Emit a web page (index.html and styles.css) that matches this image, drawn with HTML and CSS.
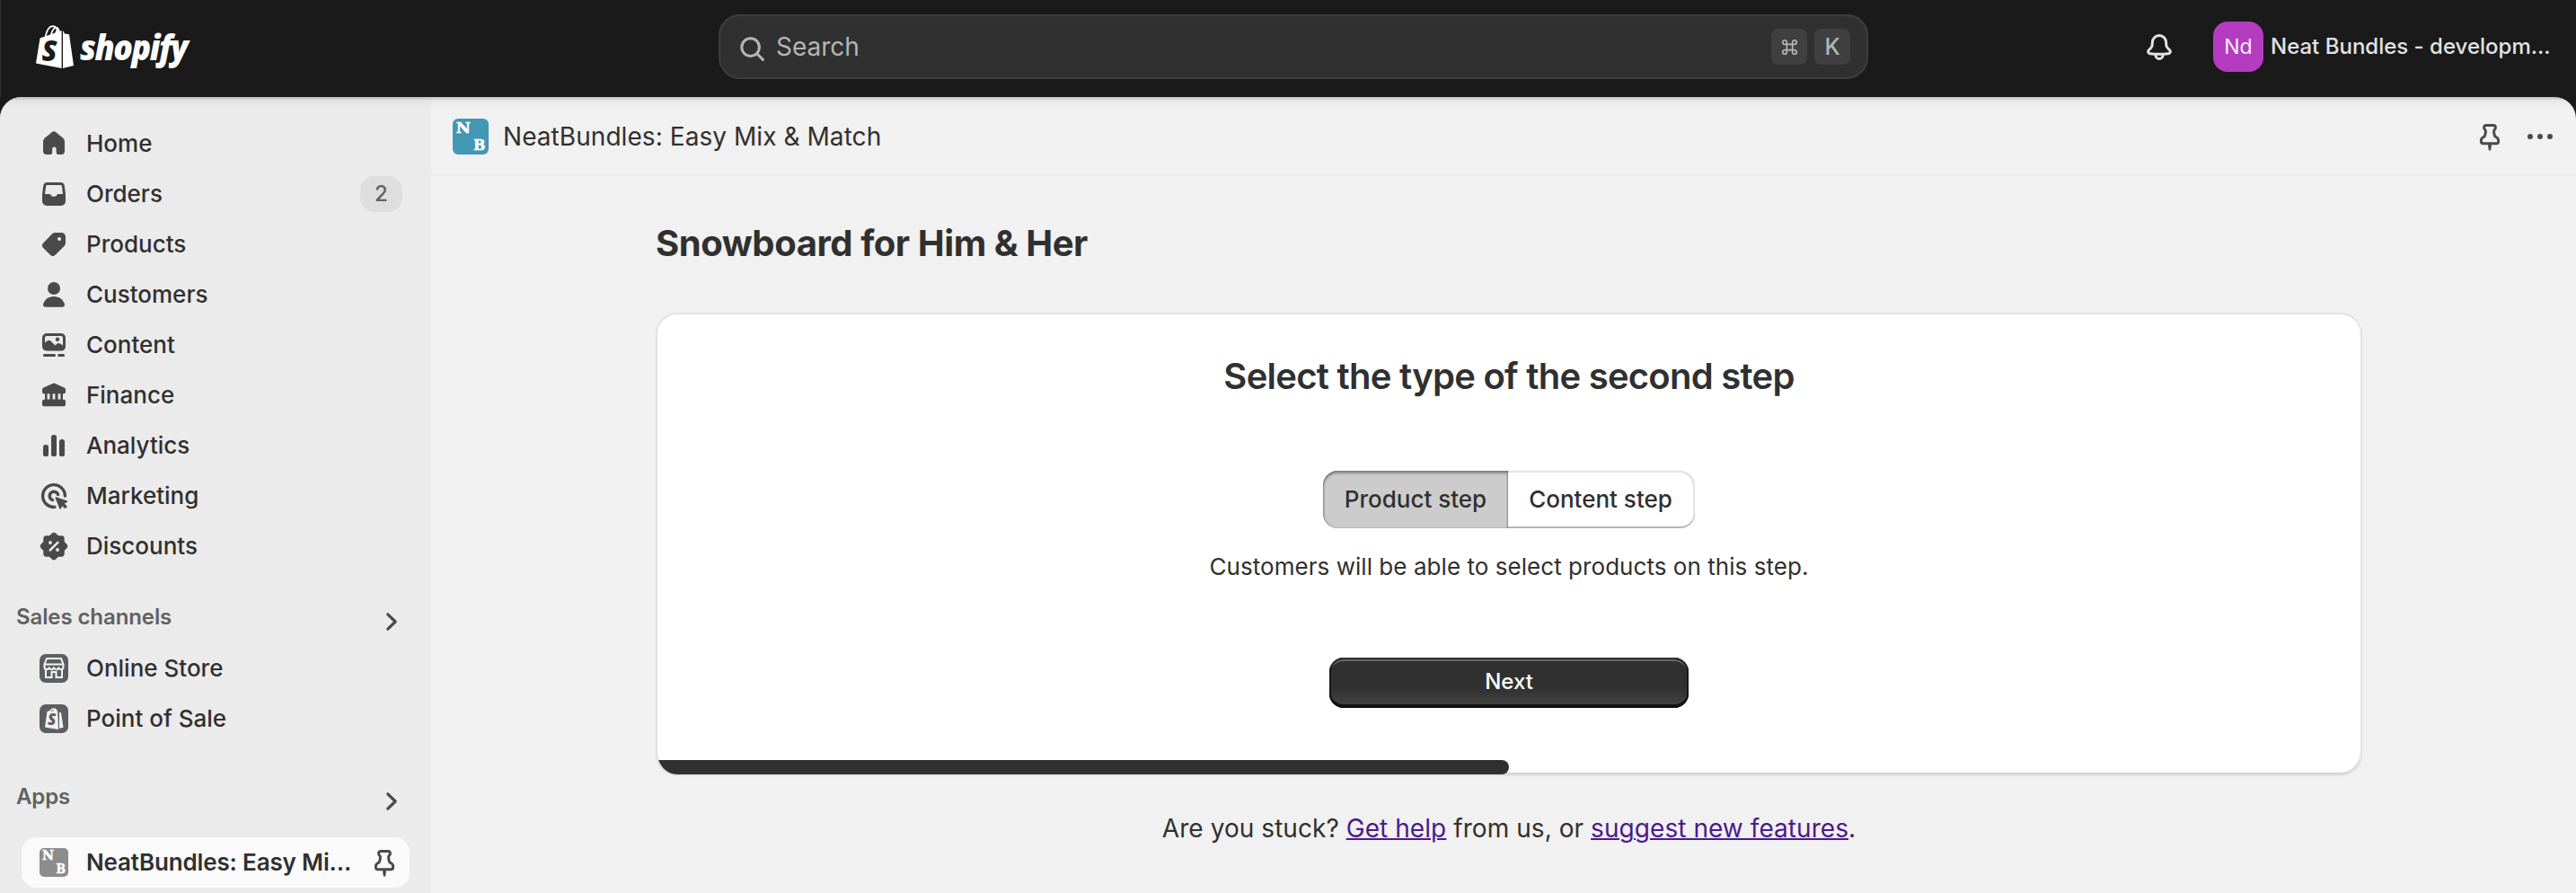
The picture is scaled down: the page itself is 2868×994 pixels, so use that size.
FILE: index.html
```html
<!DOCTYPE html>
<html lang="en">
<head>
<meta charset="utf-8">
<title>NeatBundles: Easy Mix &amp; Match</title>
<link rel="stylesheet" href="styles.css">
</head>
<body>
<svg class="defs" aria-hidden="true">
  <symbol id="pin" viewBox="0 0 20 20"><path d="M8 3.750h4c.7 0 1.200.5 1.200 1.200 0 .5-.2.9-.5 1.200-.4.4-.5.8-.4 1.300l.3 1.700c.1.6.4.9.9 1.100.8.4 1.300 1 1.300 1.900v.6c0 .6-.5 1.100-1.100 1.100H6.300c-.6 0-1.100-.5-1.100-1.100v-.6c0-.9.5-1.500 1.300-1.900.5-.2.8-.5.9-1.100l.3-1.700c.1-.5 0-.9-.4-1.300-.3-.3-.5-.7-.5-1.200 0-.7.5-1.200 1.200-1.200z" fill="none" stroke="currentColor" stroke-width="1.500" stroke-linejoin="round"/><path d="M9.100 14h1.800v1.800L10.500 17.800h-1L9.100 15.800z" fill="currentColor"/></symbol>
  <symbol id="chevron" viewBox="0 0 20 20"><path d="M7.900 5.900 12.100 10l-4.200 4.100" fill="none" stroke="currentColor" stroke-width="1.600" stroke-linecap="round" stroke-linejoin="round"/></symbol>
</svg>
<header class="topbar">
  <div class="logo">
    <svg class="bag" viewBox="0 0 42 48"><path d="M10.500 14C12 5 15.500 1.200 19 1.200S24 5 24.500 10M16.500 12C18 5 21 1.800 23.500 2.800s2.200 4 2.500 6.200M22 10c.5-3 1.500-5 3-5.500" fill="none" stroke="#fff" stroke-width="1.700"/><path d="M4.500 14.500 28.600 6v42L0 42.500z" fill="#fff"/><path d="M30 6l2 3.500 5 .8L42 45l-12 3z" fill="#fff"/><text x="6.500" y="39.500" class="bag-s">S</text></svg>
    <span class="wordmark">shopify</span>
  </div>
  <div class="search">
    <svg class="ic" viewBox="0 0 20 20"><circle cx="8.800" cy="8.800" r="4.900" fill="none" stroke="currentColor" stroke-width="1.500"/><path d="M12.500 12.500l3.200 3.200" stroke="currentColor" stroke-width="1.500" stroke-linecap="round"/></svg>
    <span class="search-text">Search</span>
    <kbd><svg viewBox="0 0 20 20"><path d="M7 7h6v6H7zM7 7H4.800A2.200 2.200 0 1 1 7 4.800zM13 7V4.800A2.200 2.200 0 1 1 15.200 7zM13 13h2.200A2.200 2.200 0 1 1 13 15.200zM7 13v2.200A2.200 2.200 0 1 1 4.800 13z" fill="none" stroke="currentColor" stroke-width="1.600"/></svg></kbd>
    <kbd>K</kbd>
  </div>
  <div class="account">
    <svg class="ic bell" viewBox="0 0 20 20"><path d="M10 3.750c-2.200 0-3.700 1.700-3.800 3.700l-.1 1.500c0 .8-.3 1.300-.8 1.800l-1 1c-.9.9-.4 2 .7 2.100 3.300.4 6.700.4 10 0 1.100-.1 1.600-1.200.7-2.100l-1-1c-.5-.5-.8-1-.8-1.800l-.1-1.500c-.1-2-1.600-3.700-3.800-3.700zM8 14.300v.4a2 2 0 0 0 4 0v-.4" fill="none" stroke="currentColor" stroke-width="1.500" stroke-linejoin="round"/></svg>
    <span class="avatar">Nd</span>
    <span class="store">Neat Bundles - developm...</span>
  </div>
</header>
<div class="frame">
  <nav class="sidebar">
    <a class="item"><svg class="ic" viewBox="0 0 20 20"><path d="M8.700 3.700a2 2 0 0 1 2.600 0l3.700 3.100c.7.6 1 1.400 1 2.300V14a2 2 0 0 1-2 2h-1.300a1.400 1.400 0 0 1-1.400-1.400v-1.700a1.100 1.100 0 0 0-2.200 0v1.700A1.400 1.400 0 0 1 7.700 16H6a2 2 0 0 1-2-2V9.100c0-.9.300-1.700 1-2.300z"/></svg>Home</a>
    <a class="item"><svg class="ic" viewBox="0 0 20 20"><path fill-rule="evenodd" d="M6.300 3.500h7.400a2.200 2.200 0 0 1 2.200 1.900l.6 4.600v4a2.500 2.500 0 0 1-2.500 2.500H6A2.500 2.500 0 0 1 3.500 14v-4l.6-4.600a2.200 2.200 0 0 1 2.200-1.900zM6.300 5c-.4 0-.7.300-.7.600L5 10h2.200c.6 0 1 .2 1.200.6.400 1 2.800 1 3.200 0 .2-.4.6-.6 1.200-.6H15l-.6-4.400c0-.3-.3-.6-.7-.6z"/></svg>Orders<span class="badge">2</span></a>
    <a class="item"><svg class="ic" viewBox="0 0 20 20"><path fill-rule="evenodd" d="M10.700 3.500h3.600a2.200 2.200 0 0 1 2.200 2.200v3.400c0 .7-.3 1.400-.8 1.900l-4.900 4.900a2 2 0 0 1-2.800 0l-3.900-3.900a2 2 0 0 1 0-2.800l4.700-4.800c.5-.6 1.200-.9 1.900-.9zM13 8a1 1 0 1 0 0-2 1 1 0 0 0 0 2z"/></svg>Products</a>
    <a class="item"><svg class="ic" viewBox="0 0 20 20"><circle cx="10" cy="6.500" r="3.500"/><path d="M10 11c3.100 0 5 1.800 5.900 4 .3 1-.3 1.900-1.200 1.900H5.300c-.9 0-1.500-.9-1.200-1.900.9-2.200 2.800-4 5.900-4z"/></svg>Customers</a>
    <a class="item"><svg class="ic" viewBox="0 0 20 20"><path fill-rule="evenodd" d="M6 3.500h8A2.500 2.500 0 0 1 16.500 6v4.800a2.500 2.500 0 0 1-2.500 2.500H6a2.500 2.500 0 0 1-2.500-2.500V6A2.500 2.500 0 0 1 6 3.500zM6 5a1 1 0 0 0-1 1v2.800l1.200-1c.6-.6 1.400-.6 2 0l2.500 2.400 1.100-.9c.5-.4 1.200-.4 1.700 0l1.500 1V6a1 1 0 0 0-1-1zM12 8a1.100 1.100 0 1 0 0-2.200A1.100 1.100 0 0 0 12 8z"/><path d="M4.700 15.700h5.600M12.800 15.700h2.500" stroke="currentColor" stroke-width="1.500" stroke-linecap="round"/></svg>Content</a>
    <a class="item"><svg class="ic" viewBox="0 0 20 20"><path d="M9.500 3.400q.5-.2 1 0l5.300 2.300q.7.300.7 1v1.400a1 1 0 0 1-1 1H15v3.300h.5a1 1 0 0 1 1 1v1.700a1 1 0 0 1-1 1h-11a1 1 0 0 1-1-1v-1.700a1 1 0 0 1 1-1H5V9.100h-.5a1 1 0 0 1-1-1V6.700q0-.7.700-1z"/><path class="cut" d="M6.300 9.100h1.400v3.200H6.300zM9.300 9.100h1.400v3.200H9.300zM12.300 9.100h1.400v3.200h-1.400z"/></svg>Finance</a>
    <a class="item"><svg class="ic" viewBox="0 0 20 20"><rect x="4" y="9.500" width="3" height="6.500" rx="1.300"/><rect x="8.500" y="4" width="3" height="12" rx="1.300"/><rect x="13" y="6.500" width="3" height="9.500" rx="1.300"/></svg>Analytics</a>
    <a class="item"><svg class="ic" viewBox="0 0 20 20"><path d="M16.200 10A6.200 6.200 0 1 0 10.500 16.200M12.300 9.300A2.400 2.400 0 1 0 9.300 12.300" fill="none" stroke="currentColor" stroke-width="1.700" stroke-linecap="round"/><path d="M11.200 10.600l6 2c.5.200.5.700.1.900l-1.400.8 1.200 1.200c.6.700-.6 1.900-1.300 1.300l-1.200-1.200-.6 1.400c-.2.500-.8.500-.9 0l-2.300-5.900c-.1-.3.100-.6.400-.5z"/></svg>Marketing</a>
    <a class="item"><svg class="ic" viewBox="0 0 20 20"><rect x="4.150" y="4.150" width="11.700" height="11.700" rx="1.700"/><rect x="4.150" y="4.150" width="11.700" height="11.700" rx="1.700" transform="rotate(45 10 10)"/><path d="M7.900 12.200l4.300-4.300" class="cut-line"/><circle cx="8" cy="8" r=".95" class="cut"/><circle cx="12" cy="12" r=".95" class="cut"/></svg>Discounts</a>
    <div class="section first"><span>Sales channels</span><svg class="ic"><use href="#chevron"/></svg></div>
    <a class="item"><svg class="sq" viewBox="0 0 32 32"><rect width="32" height="32" rx="7" fill="#5c5f62"/><path d="M8 5h16l2.500 6.500v3a2.600 2.600 0 0 1-5.200 0 2.600 2.600 0 0 1-5.300 0 2.600 2.600 0 0 1-5.300 0 2.600 2.600 0 0 1-5.200 0v-3zM5.500 11.500h21M7 17.500V26h6.500v-6h5v6H25v-8.500" fill="none" stroke="#f4f4f4" stroke-width="2"/></svg>Online Store</a>
    <a class="item"><svg class="sq" viewBox="0 0 32 32"><rect width="32" height="32" rx="7" fill="#5c5f62"/><path d="M8.500 8l3-1c.8-2 2.500-2.800 4.500-2.800s3.500 1.600 4.200 4L21 28 6 25.600zM22 8.500l2 1 2.500 16.300-4.500 1z" fill="#f4f4f4"/><path d="M13 8c.5-1.500 2-1.800 3-.7" stroke="#5c5f62" fill="none"/><text x="9" y="22.800" class="pos-s">S</text></svg>Point of Sale</a>
    <div class="section second"><span>Apps</span><svg class="ic"><use href="#chevron"/></svg></div>
    <a class="item active"><svg class="sq" viewBox="0 0 32 32"><rect width="32" height="32" rx="5" fill="#8c8c8c"/><text x="3" y="13" textLength="13" lengthAdjust="spacingAndGlyphs" class="nb">N</text><text x="18.500" y="28" textLength="10.500" lengthAdjust="spacingAndGlyphs" class="nb">B</text></svg><span class="label">NeatBundles: Easy Mi...</span><svg class="ic pin"><use href="#pin"/></svg></a>
  </nav>
  <main class="main">
    <div class="appbar">
      <svg class="applogo" viewBox="0 0 32 32"><rect width="32" height="32" rx="5" fill="#4298b4"/><text x="3" y="13" textLength="13" lengthAdjust="spacingAndGlyphs" class="nb">N</text><text x="18.500" y="28" textLength="10.500" lengthAdjust="spacingAndGlyphs" class="nb">B</text></svg>
      <span class="appname">NeatBundles: Easy Mix &amp; Match</span>
      <svg class="ic"><use href="#pin"/></svg>
      <svg class="ic" viewBox="0 0 20 20"><circle cx="4.500" cy="10" r="1.500"/><circle cx="10" cy="10" r="1.500"/><circle cx="15.500" cy="10" r="1.500"/></svg>
    </div>
    <div class="page">
      <h1>Snowboard for Him &amp; Her</h1>
      <section class="card">
        <h2>Select the type of the second step</h2>
        <div class="segmented"><button class="seg on">Product step</button><button class="seg off">Content step</button></div>
        <p class="hint">Customers will be able to select products on this step.</p>
        <button class="next">Next</button>
        <div class="progress"></div>
      </section>
      <p class="help">Are you stuck? <a href="#">Get help</a> from us, or <a href="#">suggest new features</a>.</p>
    </div>
  </main>
</div>
</body>
</html>
```
FILE: styles.css
```css
* { box-sizing: border-box; }
body { margin: 0; height: 994px; overflow: hidden; background: #1a1a1a; color: #303030; font: 400 26px/40px Inter, "Liberation Sans", sans-serif; display: flex; flex-direction: column; }
h1, h2, p { margin: 0; }
button { font: inherit; color: inherit; border: 0; margin: 0; }
.defs { position: absolute; width: 0; height: 0; }
.ic { width: 40px; height: 40px; flex: none; fill: currentColor; }

.topbar { height: 108px; flex: none; display: grid; grid-template-columns: 800px 1280px 1fr; align-items: center; padding-bottom: 4px; box-shadow: inset 1px 0 0 #333; }
.logo { display: flex; align-items: center; padding-left: 40px; gap: 7px; }
.bag { width: 42px; height: 48px; }
.bag-s { font: italic 800 31px "Open Sans", sans-serif; fill: #1a1a1a; }
.wordmark { color: #fff; font: italic 800 38px/48px "Open Sans", sans-serif; letter-spacing: -1.5px; transform: scaleX(.94); transform-origin: left; }
.search { height: 72px; border-radius: 24px; background: #303030; box-shadow: inset 0 0 0 2px #3c3c3c, inset 0 2px 0 #555; color: #b5b5b5; display: flex; align-items: center; gap: 8px; padding: 0 20px 0 18px; }
.search > .ic { margin-top: 5px; }
.search-text { flex: 1; font-size: 28px; margin-left: -2px; }
kbd { width: 40px; height: 40px; border-radius: 8px; background: #404040; display: flex; align-items: center; justify-content: center; font: 500 25px/40px Inter, sans-serif; }
kbd svg { width: 21px; height: 21px; }
.account { display: flex; align-items: center; color: #e3e3e3; padding-left: 304px; }
.avatar { width: 56px; height: 56px; border-radius: 16px; background: #b43cc0; margin-left: 40px; text-align: center; line-height: 56px; font-size: 23px; font-weight: 400; color: #fbeffc; }
.store { margin-left: 8px; font-size: 24px; font-weight: 500; white-space: nowrap; }

.frame { flex: 1; display: flex; border-radius: 24px 24px 0 0; overflow: hidden; background: #f1f1f1; }
.sidebar { width: 480px; flex: none; background: linear-gradient(#0003, #0000000a 4px, #0000 12px), #ebebeb; padding: 24px 24px 0; font-weight: 500; color: #303030; }
.item { display: flex; align-items: center; height: 56px; padding: 0 8px 0 16px; gap: 16px; border-radius: 16px; white-space: nowrap; }
.item > .ic { color: #4a4a4a; }
.cut { fill: #ebebeb; }
.cut-line { stroke: #ebebeb; stroke-width: 1.3; stroke-linecap: round; }
.sq { width: 32px; height: 32px; margin: 0 4px; flex: none; }
.badge { margin-left: auto; width: 47px; height: 40px; border-radius: 16px; background: #dedede; color: #616161; text-align: center; font-size: 24px; }
.section { display: flex; height: 56px; justify-content: space-between; color: #616161; margin: 0 0 0 -6px; padding: 7px 0 0; font-size: 24px; font-weight: 600; letter-spacing: -.1px; }
.section .ic { margin: 5px 0 0; color: #4a4a4a; }
.first { margin-top: 24px; }
.second { margin-top: 32px; }
.active { background: #fafafa; font-weight: 600; margin-top: 16px; }
.active .pin { margin-left: -24px; }
.label { flex: 1; letter-spacing: -.15px; }
.pos-s { font: italic 800 17px "Open Sans", sans-serif; fill: #5c5f62; }
.nb { font: 700 14px "DejaVu Serif", serif; fill: #fff; stroke: #fff; stroke-width: .5; }

.main { flex: 1; display: flex; flex-direction: column; background: linear-gradient(#0003, #0000000a 4px, #0000 12px) no-repeat; }
.appbar { height: 88px; border-bottom: 2px solid #ebebeb; display: flex; align-items: center; padding: 2px 20px 0 24px; gap: 16px; font-size: 28px; letter-spacing: .06px; }
.appbar .ic { color: #4a4a4a; }
.applogo { width: 40px; height: 40px; }
.appname { flex: 1; }
.page { width: 1900px; margin-left: 250px; display: flex; flex-direction: column; padding-top: 51px; }
h1 { font-size: 40px; line-height: 48px; font-weight: 700; letter-spacing: -.43px; }
.card { margin-top: 53px; height: 514px; background: #fff; border-radius: 24px; overflow: hidden; display: flex; flex-direction: column; align-items: center; border: solid #e3e3e3; border-width: 2px 2px 0; box-shadow: inset 0 -2px 0 #d4d4d4, 0 2px 0 #e3e3e3; }
h2 { font-size: 40px; line-height: 48px; font-weight: 600; letter-spacing: -.74px; margin-top: 45px; }
.segmented { display: flex; margin-top: 81px; height: 64px; width: 414px; }
.seg { flex: 1; padding: 0; background: #fff; font-weight: 500; border-radius: 0 16px 16px 0; box-shadow: inset 0 -2px 0 #b5b5b5, inset 0 0 0 2px #e3e3e3; }
.off { padding-right: 2px; box-shadow: inset 0 -2px 0 #b5b5b5, inset -2px 2px 0 #e3e3e3; }
.on { background: #ccc; border-radius: 16px 0 0 16px; box-shadow: inset 0 3px 3px #0005, inset 1px 0 2px #0004, inset -1px 0 1px #0003; }
.hint { margin-top: 23px; letter-spacing: .05px; }
.next { margin-top: 81px; width: 400px; height: 56px; border-radius: 16px; font-weight: 500; font-size: 24px; color: #fff; background: linear-gradient(#303030 60%, #474747); padding: 0 0 2px; box-shadow: inset 0 2px 0 #303030, inset 0 -4px 0 #111, inset 0 0 0 2px #1a1a1a, inset 0 4px 0 #666; }
.progress { width: 50%; height: 16px; background: #303030; border-radius: 0 8px 8px 0; align-self: flex-start; margin-top: auto; }
.help { margin-top: 40px; text-align: center; font-size: 28px; letter-spacing: .06px; }
.help a { color: #4b1a8a; text-decoration-thickness: 2px; }
```
